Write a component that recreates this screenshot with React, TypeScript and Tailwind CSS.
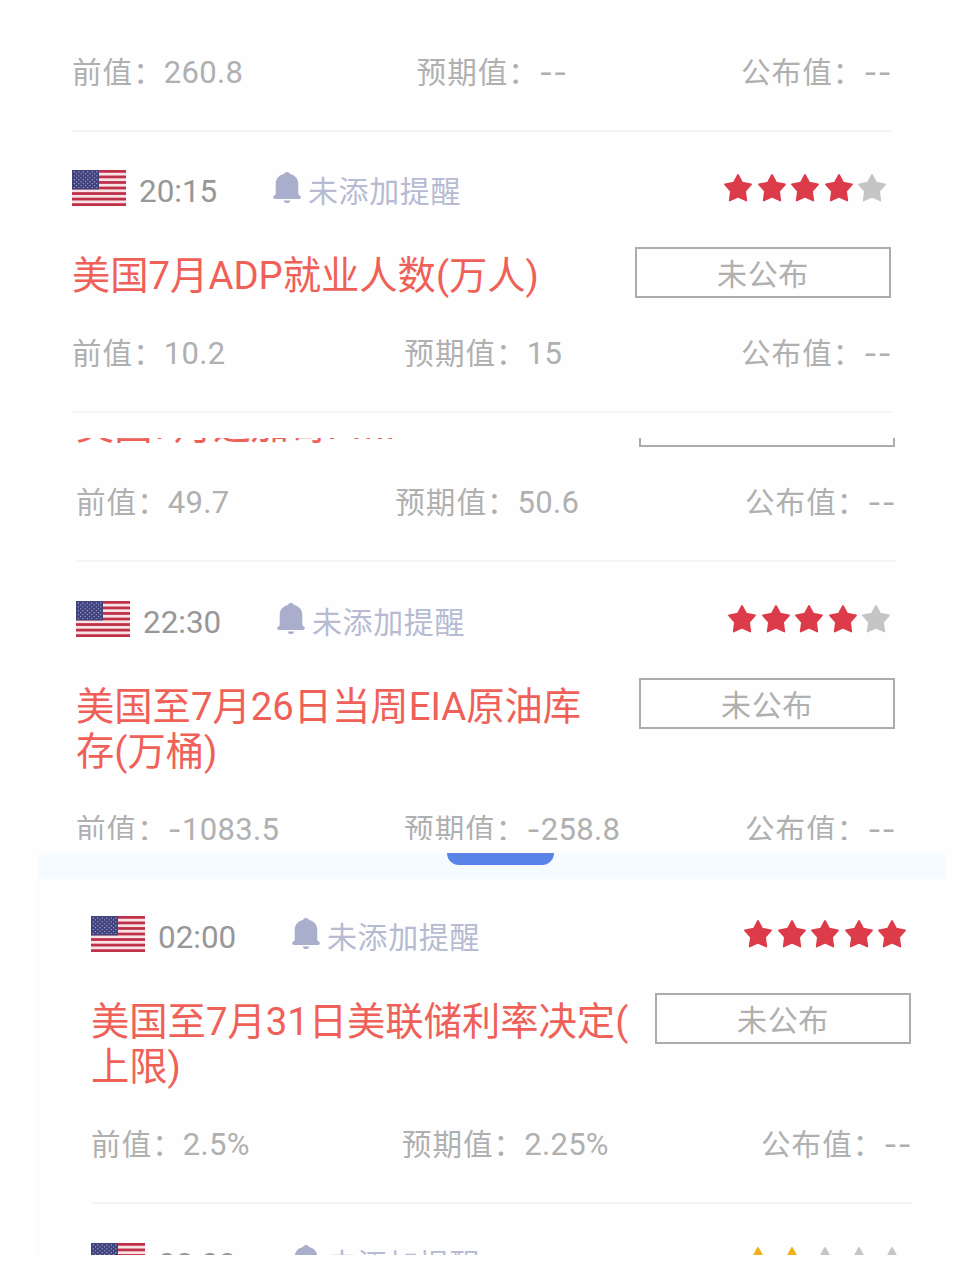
import { clsx } from "clsx";

type CalendarEvent = {
  time: string;
  title: string;
  stars: number;
  starColor?: string;
  previous: string;
  forecast: string;
};

const RED = "#dc3b49";
const AMBER = "#f2b01e";
const GREY = "#c5c5c5";

const adp: CalendarEvent = {
  time: "20:15",
  title: "美国7月ADP就业人数(万人)",
  stars: 4,
  previous: "10.2",
  forecast: "15",
};

const pmi: CalendarEvent = {
  time: "21:45",
  title: "美国7月芝加哥PMI",
  stars: 3,
  previous: "49.7",
  forecast: "50.6",
};

const crude: CalendarEvent = {
  time: "22:30",
  title: "美国至7月26日当周EIA原油库\n存(万桶)",
  stars: 4,
  previous: "-1083.5",
  forecast: "-258.8",
};

const fed: CalendarEvent = {
  time: "02:00",
  title: "美国至7月31日美联储利率决定(\n上限)",
  stars: 5,
  previous: "2.5%",
  forecast: "2.25%",
};

function Flag() {
  const stripe = 36 / 13;
  return (
    <svg width="54" height="36" viewBox="0 0 54 36" className="shrink-0">
      <rect width="54" height="36" fill="#f8e4e6" />
      {[0, 2, 4, 6, 8, 10, 12].map((i) => (
        <rect key={i} y={i * stripe} width="54" height={stripe} fill="#bf3049" />
      ))}
      <rect width="27" height="19.4" fill="#41437f" />
      {Array.from({ length: 9 }, (_, row) =>
        Array.from({ length: row % 2 ? 5 : 6 }, (_, col) => (
          <circle
            key={`${row}-${col}`}
            cx={2.3 + col * 4.5 + (row % 2 ? 2.25 : 0)}
            cy={1.9 + row * 1.95}
            r="0.6"
            fill="#b9bbdc"
          />
        ))
      )}
    </svg>
  );
}

function Bell() {
  return (
    <svg width="28" height="32" viewBox="0 0 28 32" fill="#a8aecb" className="shrink-0">
      <path d="M14 0c1.600 0 2.700.8 3 2 5.300 1.200 8.300 5 8.300 10.200v9.300c0 1 .3 1.300 1.100 1.800.9.500 1.400 1.100 1.400 2 0 1.100-.8 1.700-1.800 1.700H2c-1 0-1.800-.6-1.800-1.700 0-.9.5-1.500 1.400-2 .8-.5 1.100-.8 1.100-1.800v-9.300c0-5.200 3-9 8.300-10.200.3-1.200 1.400-2 3-2z" />
      <path d="M10.600 28.400h6.800c-.5 1.700-1.800 2.600-3.400 2.600s-2.900-.9-3.400-2.600z" />
    </svg>
  );
}

function Star({ color }: { color: string }) {
  return (
    <svg width="28" height="28" viewBox="0 0 28 28" fill={color} stroke={color} strokeWidth="1.8" strokeLinejoin="round">
      <path d="M14 1l4.200 7.700 8.800 1.700-6 6.700 1.300 9.400-8.300-3.700-8.300 3.700 1.300-9.400L1 10.400l8.800-1.700z" />
    </svg>
  );
}

// The minus sign is wider than Roboto's own hyphen
function Value({ children }: { children: string }) {
  const dashes = children.match(/^-+/)?.[0] ?? "";
  return (
    <span className="text-[31px] tracking-[0.3px]">
      {dashes && <span className="font-['Inter'] text-[30px] tracking-[0.500px]">{dashes}</span>}
      {children.slice(dashes.length)}
    </span>
  );
}

function Stats({ previous, forecast }: { previous: string; forecast: string }) {
  return (
    <div className="flex h-[46px] items-center justify-between pt-px text-[29.6px] leading-[46px] tracking-[1px] text-[#b0b0b0]">
      <span>前值：<Value>{previous}</Value></span>
      <span>预期值：<Value>{forecast}</Value></span>
      <span>公布值：<Value>--</Value></span>
    </div>
  );
}

function Divider() {
  return <div className="h-[2px] bg-[#f5f5f5]" />;
}

function EventRow({ event, className }: { event: CalendarEvent; className?: string }) {
  return (
    <div className={clsx("pt-[38px]", className)}>
      <div className="flex h-9 items-center">
        <Flag />
        <span className="ml-[13px] w-[134px] pt-[7px] text-[31.4px] leading-9 text-[#979797]">{event.time}</span>
        <Bell />
        <span className="ml-[7px] pt-[7px] text-[30px] leading-9 tracking-[0.6px] text-[#b6bbd2]">未添加提醒</span>
        <div className="mr-[6px] ml-auto flex gap-[5.400px]">
          {[0, 1, 2, 3, 4].map((i) => (
            <Star key={i} color={i < event.stars ? event.starColor ?? RED : GREY} />
          ))}
        </div>
      </div>
      <div className="mt-[41px] flex items-start justify-between">
        <h2 className="mt-[6px] text-[38.3px] leading-[45px] whitespace-pre text-[#ef6158]">{event.title}</h2>
        <div className="mr-px flex h-[51px] w-64 shrink-0 items-center justify-center border-[2.500px] border-[#acacac] pt-[3px] text-[30px] tracking-[0.6px] text-[#b0b0b0]">
          未公布
        </div>
      </div>
      <div className="mt-[32px] mb-[35px]">
        <Stats previous={event.previous} forecast={event.forecast} />
      </div>
      <Divider />
    </div>
  );
}

function Panel({ className, children }: { className: string; children: React.ReactNode }) {
  return <section className={clsx("overflow-hidden", className)}>{children}</section>;
}

export default function App() {
  return (
    <main className="h-[1280px] w-[971px] overflow-hidden bg-[#fefefe] font-['Roboto','Noto_Sans_CJK_SC',sans-serif]">
      <Panel className="h-[438px] pt-[49px] pr-[79px] pl-[72px]">
        <div className="mb-[35px]">
          <Stats previous="260.8" forecast="--" />
        </div>
        <Divider />
        <EventRow event={adp} />
      </Panel>

      <Panel className="h-[402px] pr-[75px] pl-[76px]">
        <div className="-mt-[157px]">
          <EventRow event={pmi} className="[&_h2]:-mb-px [&_h2]:pt-px" />
          <EventRow event={crude} className="mt-px" />
        </div>
      </Panel>

      <Panel className="mt-[13px] ml-[38px] h-[402px] w-[908px]">
        <div className="flex h-[26px] items-start justify-center bg-[#f5fbfe] pl-[17px]">
          <div className="h-3 w-[107px] rounded-b-[13px] bg-[#5a83e8]" />
        </div>
        <div className="-mt-px border-l border-[#f4f8fa] pr-[34px] pl-[52px]">
          <EventRow event={fed} />
          <EventRow event={{ ...fed, stars: 2, starColor: AMBER }} className="mt-px" />
        </div>
      </Panel>
    </main>
  );
}
